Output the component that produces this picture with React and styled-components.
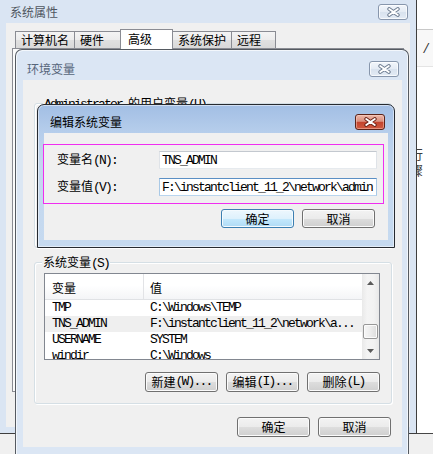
import React from "react";
import styled, { createGlobalStyle, css } from "styled-components";

const CJK = `"Noto Sans CJK SC", "Noto Sans", sans-serif`;
const MONO = `"Liberation Mono", "DejaVu Sans Mono", monospace`;

const GlobalStyle = createGlobalStyle`
  html, body { margin: 0; padding: 0; background: #ffffff; }
  body { font-family: ${CJK}; font-size: 12px; color: #000; }
  *, *::before, *::after { box-sizing: border-box; }
`;

const Stage = styled.div`
  position: relative;
  width: 433px;
  height: 454px;
  overflow: hidden;
  background: #ffffff;
`;

/* ---------- things behind the windows ---------- */
const BackStrip = styled.div`
  position: absolute;
  left: 417px;
  right: 0;
  top: 29px;
  height: 38px;
  background: #f8f8f8;
  border-top: 1px solid #c8c8c8;
  border-bottom: 1px solid #e4e4e4;
`;
const BackGlyph = styled.span`
  position: absolute;
  left: 424px;
  top: 40px;
  font: italic bold 15px "Liberation Serif", serif;
  color: #2a2a2a;
`;
const BackWord = styled.span`
  position: absolute;
  left: 410px;
  top: 146px;
  font-family: ${CJK};
  font-size: 13px;
  line-height: 16px;
  color: #3c3c3c;
`;
const Floor = styled.div`
  position: absolute;
  left: 0;
  right: 0;
  top: 433px;
  bottom: 0;
  background: #f0f0f0;
  border-top: 1px solid #464646;
`;

/* ---------- shared text ---------- */
const Hw = styled.span`
  font-family: ${MONO};
  font-size: 13px;
  letter-spacing: -1.8px;
`;
const Zh = styled.span`
  font-family: ${CJK};
  font-size: 12px;
`;

/* ---------- caption ---------- */
const TitleBar = styled.header`
  display: flex;
  align-items: flex-start;
  justify-content: space-between;
  height: ${(p) => p.$h}px;
  padding-top: ${(p) => p.$top}px;
  flex: none;
`;
const TitleText = styled.span`
  font-family: ${CJK};
  font-size: 12px;
  line-height: 16px;
  color: ${(p) => p.$color};
  margin-left: ${(p) => p.$indent}px;
`;
const CaptionButton = styled.button`
  width: 30px;
  height: 16px;
  padding: 0;
  margin: 0 ${(p) => p.$right}px 0 0;
  display: flex;
  align-items: center;
  justify-content: center;
  border-radius: 3px;
  ${(p) =>
    p.$danger
      ? css`
          border: 1px solid #5b2319;
          background: linear-gradient(#edb8aa 0%, #da8f7e 45%, #c3442e 52%, #d05a40 100%);
          box-shadow: inset 0 0 0 1px rgba(255, 215, 205, 0.45);
        `
      : css`
          border: 1px solid #8796ac;
          background: linear-gradient(#f2f6fb 0%, #e4ebf4 50%, #d8e2ee 52%, #e3ebf5 100%);
          box-shadow: inset 0 0 0 1px rgba(255, 255, 255, 0.7);
        `}
`;

function CloseGlyph({ outline }) {
  return (
    <svg width="13" height="10" viewBox="0 0 13 10">
      <path d="M2.2 2 L10.8 8 M10.8 2 L2.2 8" stroke={outline} strokeWidth="3.8" strokeLinecap="round" fill="none" />
      <path d="M2.2 2 L10.8 8 M10.8 2 L2.2 8" stroke="#ffffff" strokeWidth="1.9" strokeLinecap="round" fill="none" />
    </svg>
  );
}

/* ---------- 系统属性 ---------- */
const OuterWindow = styled.section`
  position: absolute;
  left: 0;
  top: 0;
  width: 417px;
  height: 434px;
  background: #dae5f3;
  border-right: 1px solid #3e3e3e;
  border-bottom: 1px solid #3e3e3e;
  padding: 0 6px 6px 6px;
  display: flex;
  flex-direction: column;
`;
const OuterCaption = styled(TitleBar)`
  margin: 0 -6px;
  padding-left: 10px;
  padding-right: 8px;
`;
const OuterClient = styled.div`
  flex: 1;
  background: #f0f0f0;
  padding: 6px 6px 0 6px;
  display: flex;
  flex-direction: column;
`;
const TabStrip = styled.div`
  display: flex;
  align-items: flex-end;
  height: 20px;
  padding-left: 3px;
  margin-bottom: -1px;
  position: relative;
  z-index: 1;
`;
const Tab = styled.div`
  width: ${(p) => p.$w}px;
  height: ${(p) => (p.$active ? 20 : 17)}px;
  margin: 0 -1px ${(p) => (p.$active ? 0 : 1)}px 0;
  padding-left: ${(p) => (p.$active ? 7 : 5)}px;
  border: 1px solid #8a8c93;
  border-bottom: none;
  font-family: ${CJK};
  font-size: 12px;
  line-height: ${(p) => (p.$active ? 17 : 16)}px;
  white-space: nowrap;
  position: relative;
  z-index: ${(p) => (p.$active ? 2 : 1)};
  background: ${(p) => (p.$active ? "#ffffff" : "linear-gradient(#f4f4f4 0%, #ececec 50%, #e0e0e0 52%, #d9d9d9 100%)")};
`;
const TabPanel = styled.div`
  height: 344px;
  border: 1px solid #8a8c93;
  background: #fbfbfb;
`;

/* ---------- 环境变量 ---------- */
const EnvWindow = styled.section`
  position: absolute;
  left: 15px;
  top: 49px;
  width: 394px;
  height: 430px;
  border: 1px solid #555a61;
  border-bottom: none;
  border-radius: 7px 7px 0 0;
  background: #dbe6f4;
  box-shadow: inset 1px 1px 0 #f3f7fc, inset -1px 0 0 #f3f7fc;
  padding: 0 6px 0 7px;
  display: flex;
  flex-direction: column;
`;
const EnvClient = styled.div`
  height: 367px;
  background: #f0f0f0;
  padding: 0 10px 0 11px;
  display: flex;
  flex-direction: column;
  flex: none;
`;
const GroupBox = styled.div`
  position: relative;
  height: ${(p) => p.$h}px;
  margin-top: ${(p) => p.$mt}px;
  border: 1px solid #d5dfe5;
  border-radius: 3px;
  box-shadow: inset 1px 1px 0 #ffffff, 1px 1px 0 #ffffff;
  padding: 10px 10px 0 9px;
  display: flex;
  flex-direction: column;
  flex: none;
`;
const Legend = styled.div`
  position: absolute;
  left: ${(p) => p.$left}px;
  top: -8px;
  padding: 0 1px;
  background: #f0f0f0;
  line-height: 14px;
  white-space: pre;
`;
const ListView = styled.div`
  width: 336px;
  height: 87px;
  border: 1px solid #828790;
  background: #ffffff;
  display: flex;
  overflow: hidden;
`;
const ListTable = styled.div`
  flex: 1;
  display: flex;
  flex-direction: column;
`;
const ListHeader = styled.div`
  display: grid;
  grid-template-columns: 99px 1fr;
  height: 26px;
  flex: none;
  border-bottom: 1px solid #e0e2e5;
  background: linear-gradient(#ffffff 0%, #ffffff 45%, #f4f5f7 100%);
`;
const HeaderCell = styled.div`
  font-family: ${CJK};
  font-size: 12px;
  line-height: 16px;
  padding: 6px 0 0 ${(p) => p.$pad}px;
  border-right: ${(p) => (p.$divider ? "1px solid #e2e3e6" : "none")};
`;
const ListRow = styled.div`
  display: grid;
  grid-template-columns: 99px 1fr;
  height: 16px;
  flex: none;
  background: ${(p) => (p.$selected ? "#efefef" : "transparent")};
`;
const Cell = styled.div`
  font-family: ${MONO};
  font-size: 13px;
  letter-spacing: -1.8px;
  line-height: 16px;
  white-space: pre;
  overflow: hidden;
  padding-left: ${(p) => p.$pad}px;
`;
const ScrollBar = styled.div`
  width: 17px;
  flex: none;
  display: flex;
  flex-direction: column;
  background: linear-gradient(90deg, #e9e9e9 0%, #f4f4f4 30%, #f2f2f2 70%, #e8e8e8 100%);
`;
const ScrollArrow = styled.div`
  height: 17px;
  flex: none;
  display: flex;
  align-items: center;
  justify-content: center;
`;
const ScrollTrack = styled.div`
  flex: 1;
  display: flex;
  flex-direction: column;
  align-items: center;
`;
const ScrollThumb = styled.div`
  width: 15px;
  height: 15px;
  border: 1px solid #979797;
  border-radius: 2px;
  background: linear-gradient(90deg, #f6f6f6 0%, #ececec 50%, #dcdcdc 100%);
  box-shadow: inset 0 0 0 1px #fbfbfb;
`;
const ButtonRow = styled.div`
  display: flex;
  justify-content: flex-end;
  gap: 8px;
  margin-top: ${(p) => p.$mt}px;
  padding-right: ${(p) => p.$pr}px;
  flex: none;
`;
const Button = styled.button`
  width: 73px;
  height: ${(p) => (p.$compact ? 19 : 20)}px;
  padding: 0;
  margin: 0;
  border: 1px solid #707070;
  border-radius: 3px;
  background: linear-gradient(#f3f3f3 0%, #ebebeb 50%, #dddddd 52%, #cfcfcf 100%);
  box-shadow: inset 0 0 0 1px #fbfbfb;
  color: #000;
  display: flex;
  align-items: center;
  justify-content: center;
  white-space: pre;
  line-height: 16px;
  ${(p) =>
    p.$default &&
    css`
      border-color: #3c7fb1;
      background: linear-gradient(#edf7fd 0%, #def1fc 50%, #c4e8fc 52%, #afdbf5 100%);
      box-shadow: inset 0 0 0 1px #f4fafe;
    `}
`;

/* ---------- 编辑系统变量 ---------- */
const EditDialog = styled.section`
  position: absolute;
  left: 37px;
  top: 104px;
  width: 358px;
  height: 144px;
  border: 1px solid #262a30;
  border-radius: 7px 7px 0 0;
  background: linear-gradient(#a2bee4 0px, #b5cdeb 26px, #c3d7ee 60px, #c6daf0 100%);
  box-shadow: inset 0 0 0 1px rgba(255, 255, 255, 0.5);
  padding: 0 6px 7px 6px;
  display: flex;
  flex-direction: column;
`;
const EditClient = styled.div`
  position: relative;
  height: 107px;
  flex: none;
  background: #f0f0f0;
  padding: 18px 10px 0 13px;
  display: flex;
  flex-direction: column;
  gap: 9px;
`;
const Annotation = styled.div`
  position: absolute;
  left: -1px;
  top: 11px;
  width: 341px;
  height: 60px;
  border: 1px solid #f02ef0;
  pointer-events: none;
`;
const FieldRow = styled.div`
  display: flex;
  align-items: center;
  height: 18px;
`;
const FieldLabel = styled.label`
  width: 102px;
  flex: none;
  line-height: 16px;
  white-space: pre;
`;
const TextBox = styled.input`
  width: 218px;
  height: 18px;
  margin: 0;
  padding: 0 0 0 2px;
  background: #ffffff;
  font-family: ${MONO};
  font-size: 13px;
  letter-spacing: -1.8px;
  color: #000;
  outline: none;
  border: 1px solid;
  border-color: ${(p) => (p.$focused ? "#5b8fc4 #a9c9e6 #b9d5ee #a9c9e6" : "#c3c8cf #dfe3e8 #e6eaee #dfe3e8")};
`;

const rows = [
  ["TMP", "C:\\Windows\\TEMP"],
  ["TNS_ADMIN", "F:\\instantclient_11_2\\network\\a..."],
  ["USERNAME", "SYSTEM"],
  ["windir", "C:\\Windows"],
];

function Arrow({ down }) {
  return (
    <svg width="7" height="4" viewBox="0 0 7 4">
      <path d={down ? "M0 0 H7 L3.5 4 Z" : "M0 4 H7 L3.5 0 Z"} fill="#5a5a5a" />
    </svg>
  );
}

export default function App() {
  return (
    <>
      <GlobalStyle />
      <Stage>
        <BackStrip />
        <BackGlyph>/</BackGlyph>
        <BackWord>行骤</BackWord>
        <Floor />

        <OuterWindow>
          <OuterCaption $h={23} $top={4}>
            <TitleText $color="#4f5660" $indent={0}>系统属性</TitleText>
            <CaptionButton $right={0} aria-label="关闭">
              <CloseGlyph outline="#6d7c90" />
            </CaptionButton>
          </OuterCaption>
          <OuterClient>
            <TabStrip>
              <Tab $w={60}>计算机名</Tab>
              <Tab $w={47}>硬件</Tab>
              <Tab $w={53} $active>高级</Tab>
              <Tab $w={60}>系统保护</Tab>
              <Tab $w={45}>远程</Tab>
            </TabStrip>
            <TabPanel />
          </OuterClient>
        </OuterWindow>

        <EnvWindow>
          <TitleBar $h={30} $top={11}>
            <TitleText $color="#56657a" $indent={4}>环境变量</TitleText>
            <CaptionButton $right={3} aria-label="关闭">
              <CloseGlyph outline="#6d7c90" />
            </CaptionButton>
          </TitleBar>
          <EnvClient>
            <GroupBox $h={145} $mt={23}>
              <Legend $left={8}>
                <Hw>Administrator </Hw>
                <Zh>的用户变量</Zh>
                <Hw>(U)</Hw>
              </Legend>
            </GroupBox>
            <GroupBox $h={142} $mt={14}>
              <Legend $left={7}>
                <Zh>系统变量</Zh>
                <Hw>(S)</Hw>
              </Legend>
              <ListView>
                <ListTable>
                  <ListHeader>
                    <HeaderCell $pad={7} $divider>变量</HeaderCell>
                    <HeaderCell $pad={6}>值</HeaderCell>
                  </ListHeader>
                  {rows.map(([name, value]) => (
                    <ListRow key={name} $selected={name === "TNS_ADMIN"}>
                      <Cell $pad={7}>{name}</Cell>
                      <Cell $pad={6}>{value}</Cell>
                    </ListRow>
                  ))}
                </ListTable>
                <ScrollBar>
                  <ScrollArrow><Arrow /></ScrollArrow>
                  <ScrollTrack>
                    <ScrollThumb style={{ marginTop: 33 }} />
                  </ScrollTrack>
                  <ScrollArrow><Arrow down /></ScrollArrow>
                </ScrollBar>
              </ListView>
              <ButtonRow $mt={12} $pr={1}>
                <Button><Zh>新建</Zh><Hw>(W)...</Hw></Button>
                <Button><Zh>编辑</Zh><Hw>(I)...</Hw></Button>
                <Button><Zh>删除</Zh><Hw>(L)</Hw></Button>
              </ButtonRow>
            </GroupBox>
            <ButtonRow $mt={13} $pr={1}>
              <Button><Zh>确定</Zh></Button>
              <Button><Zh>取消</Zh></Button>
            </ButtonRow>
          </EnvClient>
        </EnvWindow>

        <EditDialog>
          <TitleBar $h={28} $top={9}>
            <TitleText $color="#000000" $indent={6}>编辑系统变量</TitleText>
            <CaptionButton $danger $right={3} aria-label="关闭">
              <CloseGlyph outline="#6a2218" />
            </CaptionButton>
          </TitleBar>
          <EditClient>
            <FieldRow>
              <FieldLabel><Zh>变量名</Zh><Hw>(N):</Hw></FieldLabel>
              <TextBox readOnly value="TNS_ADMIN" />
            </FieldRow>
            <FieldRow>
              <FieldLabel><Zh>变量值</Zh><Hw>(V):</Hw></FieldLabel>
              <TextBox $focused readOnly value={"F:\\instantclient_11_2\\network\\admin"} />
            </FieldRow>
            <ButtonRow $mt={4} $pr={3}>
              <Button $default $compact><Zh>确定</Zh></Button>
              <Button $compact><Zh>取消</Zh></Button>
            </ButtonRow>
            <Annotation />
          </EditClient>
        </EditDialog>
      </Stage>
    </>
  );
}
